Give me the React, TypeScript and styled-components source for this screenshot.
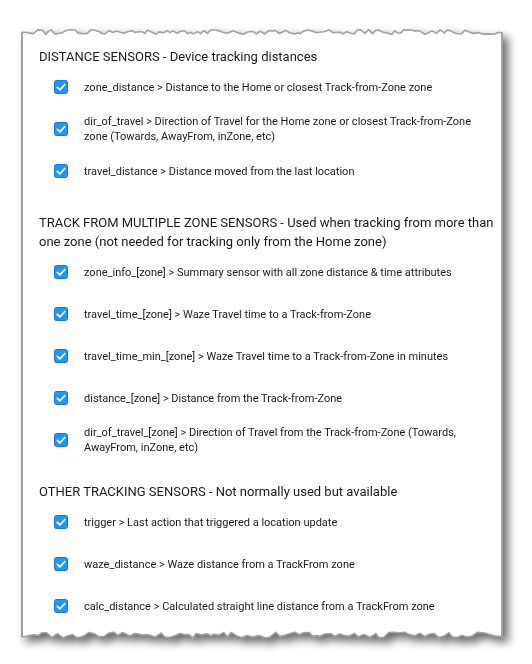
import React from "react";
import styled, { createGlobalStyle } from "styled-components";

const Global = createGlobalStyle`
  html, body { margin: 0; padding: 0; background: #ffffff; }
  body { font-family: Roboto, "Noto Sans", "Liberation Sans", sans-serif; color: #212121; }
`;

const Page = styled.div`
  width: 532px;
  height: 664px;
  padding: 28px 0 0 21px;
  box-sizing: border-box;
  overflow: hidden;
`;

const Paper = styled.div`
  width: 482px;
  display: flex;
  flex-direction: column;
  filter: drop-shadow(5px 5px 5px rgba(0, 0, 0, 0.6));
`;

const EdgeSvg = styled.svg`
  display: block;
  width: 482px;
`;

const Body = styled.div`
  background: #ffffff;
  border-left: 2px solid #a3a3a3;
  border-right: 2px solid #a3a3a3;
  padding: 11px 0 5px 16px;
  margin: -1px 0;
`;

const Section = styled.section<{ $first?: boolean }>`
  margin-top: ${(p) => (p.$first ? "0" : "21px")};
`;

const Heading = styled.div`
  font-size: 13px;
  line-height: 19px;
  color: #1a1a1a;
  width: 460px;
`;

const Row = styled.div`
  display: flex;
  align-items: center;
  min-height: 42px;
  padding-left: 15px;
`;

const Box = styled.svg`
  flex: none;
  width: 14px;
  height: 14px;
  margin-right: 16px;
`;

const Label = styled.div`
  font-size: 11px;
  line-height: 15px;
  color: #1a1a1a;
  width: 405px;
`;

function rng(seed: number) {
  let s = seed;
  return () => {
    s = (s * 1103515245 + 12345) % 2147483648;
    return s / 2147483648;
  };
}

function jagged(width: number, lo: number, hi: number, seed: number, minStep: number, maxStep: number) {
  const r = rng(seed);
  const pts: [number, number][] = [];
  let x = 0;
  while (x < width) {
    pts.push([x, lo + r() * (hi - lo)]);
    x += minStep + r() * (maxStep - minStep);
  }
  pts.push([width, lo + r() * (hi - lo)]);
  return pts;
}

const W = 482;
const topPts = jagged(W, 1.5, 6.5, 7, 2.5, 5);
const botPts = jagged(W, 1, 7, 91, 3, 6);

function TopEdge() {
  const line = topPts.map((p) => `${p[0].toFixed(1)},${p[1].toFixed(1)}`).join(" ");
  return (
    <EdgeSvg height={9} viewBox={`0 0 ${W} 9`}>
      <polygon points={`${line} ${W},9 0,9`} fill="#ffffff" />
      <polyline points={line} fill="none" stroke="#a3a3a3" strokeWidth={1.6} strokeLinejoin="round" />
      <line x1={1} y1={topPts[0][1]} x2={1} y2={9} stroke="#a3a3a3" strokeWidth={2} />
      <line x1={W - 1} y1={topPts[topPts.length - 1][1]} x2={W - 1} y2={9} stroke="#a3a3a3" strokeWidth={2} />
    </EdgeSvg>
  );
}

function BottomEdge() {
  const line = botPts.map((p) => `${p[0].toFixed(1)},${p[1].toFixed(1)}`).join(" ");
  return (
    <EdgeSvg height={9} viewBox={`0 0 ${W} 9`}>
      <polygon points={`0,0 ${W},0 ${line.split(" ").reverse().join(" ")}`} fill="#ffffff" />
      <polyline points={line} fill="none" stroke="#a3a3a3" strokeWidth={1.6} strokeLinejoin="round" />
      <line x1={1} y1={0} x2={1} y2={botPts[0][1]} stroke="#a3a3a3" strokeWidth={2} />
      <line x1={W - 1} y1={0} x2={W - 1} y2={botPts[botPts.length - 1][1]} stroke="#a3a3a3" strokeWidth={2} />
    </EdgeSvg>
  );
}

function Check() {
  return (
    <Box viewBox="0 0 14 14">
      <rect x={0.5} y={0.5} width={13} height={13} rx={2} fill="#2196f3" stroke="#1976d2" />
      <path d="M3.3 7.3 L5.9 9.8 L10.8 4.5" fill="none" stroke="#ffffff" strokeWidth={1.7} strokeLinecap="round" strokeLinejoin="round" />
    </Box>
  );
}

type Sec = { title: string; items: string[] };

const sections: Sec[] = [
  {
    title: "DISTANCE SENSORS - Device tracking distances",
    items: [
      "zone_distance > Distance to the Home or closest Track-from-Zone zone",
      "dir_of_travel > Direction of Travel for the Home zone or closest Track-from-Zone zone (Towards, AwayFrom, inZone, etc)",
      "travel_distance > Distance moved from the last location",
    ],
  },
  {
    title:
      "TRACK FROM MULTIPLE ZONE SENSORS - Used when tracking from more than one zone (not needed for tracking only from the Home zone)",
    items: [
      "zone_info_[zone] > Summary sensor with all zone distance & time attributes",
      "travel_time_[zone] > Waze Travel time to a Track-from-Zone",
      "travel_time_min_[zone] > Waze Travel time to a Track-from-Zone in minutes",
      "distance_[zone] > Distance from the Track-from-Zone",
      "dir_of_travel_[zone] > Direction of Travel from the Track-from-Zone (Towards, AwayFrom, inZone, etc)",
    ],
  },
  {
    title: "OTHER TRACKING SENSORS - Not normally used but available",
    items: [
      "trigger > Last action that triggered a location update",
      "waze_distance > Waze distance from a TrackFrom zone",
      "calc_distance > Calculated straight line distance from a TrackFrom zone",
    ],
  },
];

export default function App() {
  return (
    <>
      <Global />
      <Page>
        <Paper>
          <TopEdge />
          <Body>
            {sections.map((s, i) => (
              <Section key={i} $first={i === 0}>
                <Heading>{s.title}</Heading>
                {s.items.map((it, j) => (
                  <Row key={j}>
                    <Check />
                    <Label>{it}</Label>
                  </Row>
                ))}
              </Section>
            ))}
          </Body>
          <BottomEdge />
        </Paper>
      </Page>
    </>
  );
}
